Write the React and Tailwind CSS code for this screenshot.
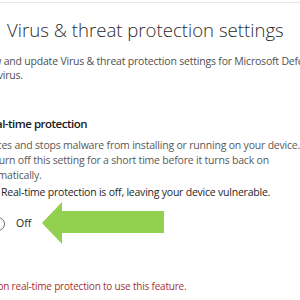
export default function App() {
  const f = { fontFamily: '"Open Sans", "Noto Sans", sans-serif' };
  return (
    <div className="relative w-[300px] h-[300px] overflow-hidden bg-white" style={f}>
      <div className="mt-[2px] border-t border-[#e6e6e6]" />
      <div className="ml-[7px] mt-[15px] text-[18.6px] leading-[24px] font-light text-[#2a2a2a] whitespace-nowrap">
        Virus &amp; threat protection settings
      </div>
      <div className="ml-[-21px] mt-[12px] text-[10.5px] leading-[14px] tracking-[-0.2px] text-[#505050] whitespace-nowrap">
        <div>View and update Virus &amp; threat protection settings for Microsoft Defender</div>
        <div>Antivirus.</div>
      </div>
      <div className="ml-[-17px] mt-[33px] text-[11.5px] leading-[18px] tracking-[-0.5px] font-semibold text-[#1a1a1a] whitespace-nowrap">
        Real-time protection
      </div>
      <div className="ml-[-24px] mt-[5px] text-[10.5px] leading-[15px] tracking-[-0.2px] text-[#5a5a5a] whitespace-nowrap">
        <div>Locates and stops malware from installing or running on your device. You</div>
        <div>can turn off this setting for a short time before it turns back on</div>
        <div>automatically.</div>
      </div>
      <div className="flex items-center mt-[2px] ml-[-24px] text-[10.5px] leading-[15px] tracking-[-0.22px] text-[#1f1f1f] whitespace-nowrap">
        <span className="w-[25px]" />
        <span>Real-time protection is off, leaving your device vulnerable.</span>
      </div>
      <div className="flex items-center mt-[17px] ml-[-35px] h-[14px] text-[10.5px] text-[#262626]">
        <div className="w-[40px] h-[14px] rounded-full border border-[#6b6b6b]" />
        <span className="ml-[11px]">Off</span>
      </div>
      <div className="ml-[-26px] mt-[48px] text-[10px] leading-[15px] tracking-[-0.2px] text-[#a83232] whitespace-nowrap">
        Turn on real-time protection to use this feature.
      </div>
      <svg className="absolute left-[42px] top-[202px]" width="123" height="42" viewBox="0 0 123 42">
        <polygon points="0,21 20,0 20,9 122,9 122,31 20,31 20,42" fill="#92d050" />
      </svg>
    </div>
  );
}
